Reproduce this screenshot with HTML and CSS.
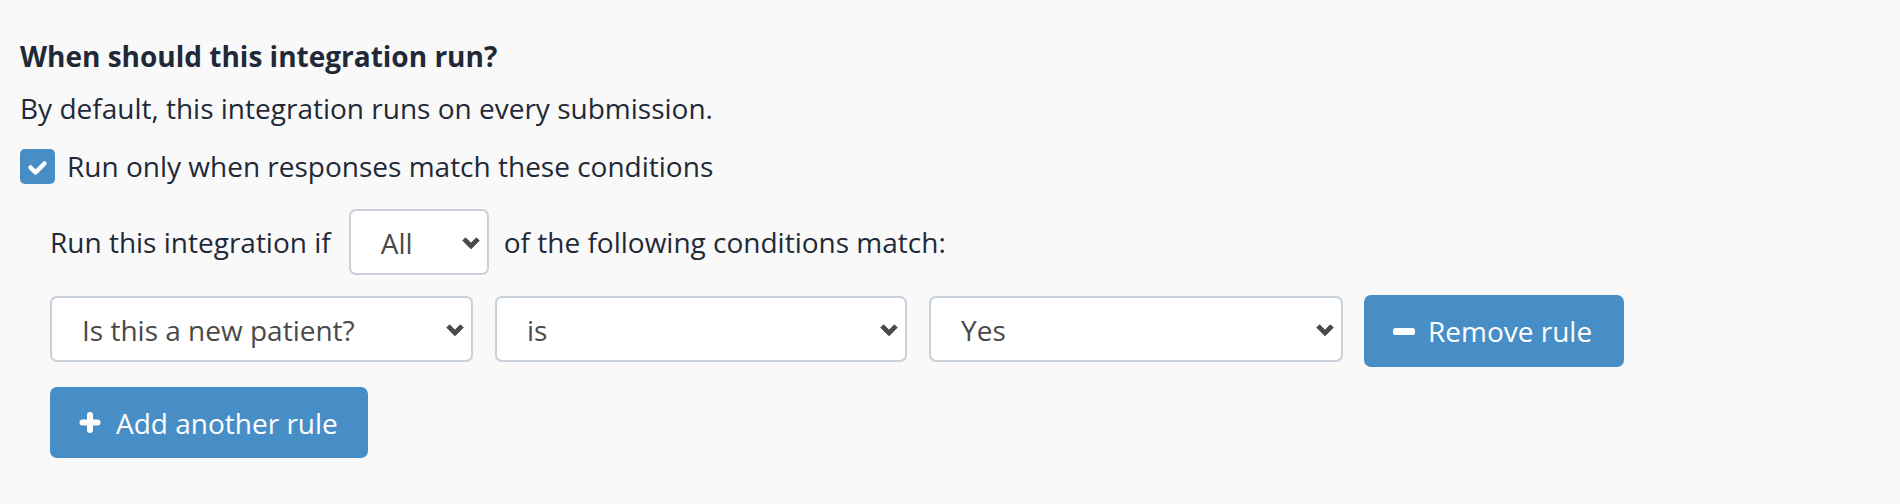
FILE: index.html
```html
<!DOCTYPE html>
<html lang="en">
<head>
<meta charset="utf-8">
<title>Integration conditions</title>
<link rel="stylesheet" href="styles.css">
</head>
<body>
<main class="page">
  <h3 class="title">When should this integration run?</h3>
  <p class="desc">By default, this integration runs on every submission.</p>
  <label class="check-row">
    <span class="checkbox">
      <svg width="35" height="35" viewBox="0 0 35 35"><polyline points="10.5,18.5 15.5,23.5 24.5,14.5" fill="none" stroke="#fff" stroke-width="4.5" stroke-linecap="round" stroke-linejoin="round"/></svg>
    </span>
    <span>Run only when responses match these conditions</span>
  </label>
  <div class="conditions">
    <div class="match-row">
      <span>Run this integration if</span>
      <div class="select select-all"><span>All</span><svg class="chev" width="18" height="13" viewBox="0 0 18 13"><polygon points="0.8,3.6 3.6,0.8 9,6.2 14.4,0.8 17.2,3.6 9,11.8" fill="currentColor" stroke="currentColor" stroke-width="1" stroke-linejoin="round"/></svg></div>
      <span>of the following conditions match:</span>
    </div>
    <div class="rule-row">
      <div class="select select-q"><span>Is this a new patient?</span><svg class="chev" width="18" height="13" viewBox="0 0 18 13"><polygon points="0.8,3.6 3.6,0.8 9,6.2 14.4,0.8 17.2,3.6 9,11.8" fill="currentColor" stroke="currentColor" stroke-width="1" stroke-linejoin="round"/></svg></div>
      <div class="select select-op"><span>is</span><svg class="chev" width="18" height="13" viewBox="0 0 18 13"><polygon points="0.8,3.6 3.6,0.8 9,6.2 14.4,0.8 17.2,3.6 9,11.8" fill="currentColor" stroke="currentColor" stroke-width="1" stroke-linejoin="round"/></svg></div>
      <div class="select select-val"><span>Yes</span><svg class="chev" width="18" height="13" viewBox="0 0 18 13"><polygon points="0.8,3.6 3.6,0.8 9,6.2 14.4,0.8 17.2,3.6 9,11.8" fill="currentColor" stroke="currentColor" stroke-width="1" stroke-linejoin="round"/></svg></div>
      <button class="btn btn-remove" type="button">
        <svg width="22" height="7" viewBox="0 0 22 7"><rect x="0" y="0" width="22" height="7" rx="2.5" fill="#fff"/></svg>
        <span>Remove rule</span>
      </button>
    </div>
    <button class="btn btn-add" type="button">
      <svg width="22" height="21" viewBox="0 0 22 21"><path d="M11 3v15M3.5 10.5h15" stroke="#fff" stroke-width="6" stroke-linecap="round"/></svg>
      <span>Add another rule</span>
    </button>
  </div>
</main>
</body>
</html>
```
FILE: styles.css
```css
html, body {
  margin: 0;
  padding: 0;
}
body {
  background: #f9f9f9;
  font-family: "Open Sans", "Liberation Sans", sans-serif;
  font-size: 28px;
  line-height: 42px;
  color: #1f2937;
}
.page {
  padding: 35px 20px 0 20px;
}
.title {
  margin: 0;
  font-size: 28px;
  font-weight: 700;
  line-height: 42px;
}
.desc {
  margin: 10px 0 0 0;
}
.check-row {
  display: flex;
  align-items: center;
  gap: 12px;
  margin-top: 16px;
}
.checkbox {
  width: 35px;
  height: 35px;
  border-radius: 5px;
  background: #488ec6;
  display: flex;
}
.conditions {
  padding-left: 30px;
  margin-top: 22px;
}
.match-row {
  display: flex;
  align-items: center;
}
.match-row .select-all {
  margin: 0 15px 0 18px;
}
.select {
  box-sizing: border-box;
  height: 66px;
  border: 2px solid #c8d0da;
  border-radius: 7px;
  background: #fff;
  padding: 2px 7px 0 30px;
  display: flex;
  align-items: center;
  justify-content: space-between;
  color: #4a4a4a;
}
.chev {
  color: #4a4a4a;
  flex: none;
}
.select-all { width: 140px; }
.select-q { width: 423px; }
.select-op { width: 412px; }
.select-val { width: 414px; }
.rule-row {
  display: flex;
  align-items: flex-start;
  gap: 22px;
  margin-top: 21px;
}
.rule-row .btn-remove {
  margin-left: -1px;
}
.btn {
  box-sizing: border-box;
  display: flex;
  align-items: center;
  border: none;
  border-radius: 7px;
  background: #488ec6;
  color: #fff;
  font-family: "Open Sans", "Liberation Sans", sans-serif;
  font-size: 28px;
  line-height: 42px;
  cursor: pointer;
}
.btn-remove {
  height: 72px;
  width: 260px;
  padding: 0 0 0 29px;
  gap: 13px;
  margin-top: -1px;
}
.btn-add {
  height: 71px;
  width: 318px;
  padding: 0 0 0 29px;
  gap: 15px;
  margin-top: 20px;
}
```
